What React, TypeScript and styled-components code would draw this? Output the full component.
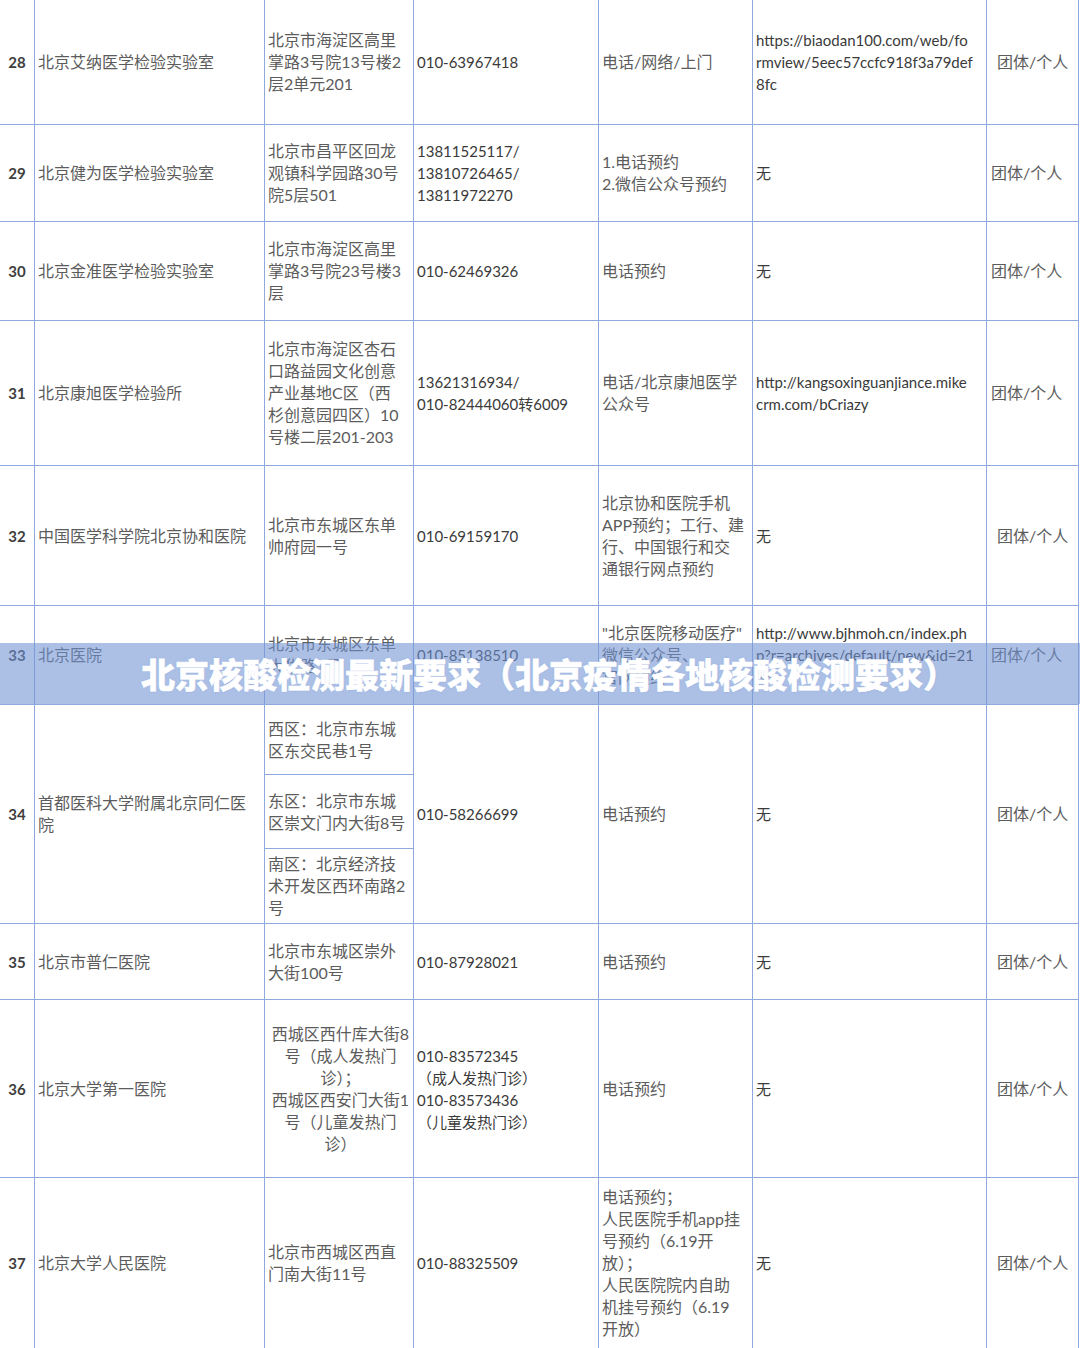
import React from 'react';
import styled, { createGlobalStyle } from 'styled-components';

const GlobalStyle = createGlobalStyle`
  html, body {
    margin: 0;
    padding: 0;
    background: #ffffff;
  }
  body {
    width: 1080px;
    height: 1348px;
    overflow: hidden;
    font-family: Lato, "Noto Sans CJK SC", sans-serif;
  }
`;

const LINE = '#8fa9de';

type Cell = string | string[];

interface RowData {
  no: number;
  height: number;
  name: Cell;
  address: Cell;
  subAddress?: { height: number; text: Cell }[];
  centerAddress?: boolean;
  phone: Cell;
  booking: Cell;
  url: Cell;
  kind: string;
  kindPad?: number;
}

const rows: RowData[] = [
  {
    no: 28,
    height: 125,
    name: '北京艾纳医学检验实验室',
    address: ['北京市海淀区高里', '掌路3号院13号楼2', '层2单元201'],
    phone: '010-63967418',
    booking: '电话/网络/上门',
    url: ['https://biaodan100.com/web/fo', 'rmview/5eec57ccfc918f3a79def', '8fc'],
    kind: '团体/个人',
    kindPad: 10,
  },
  {
    no: 29,
    height: 97,
    name: '北京健为医学检验实验室',
    address: ['北京市昌平区回龙', '观镇科学园路30号', '院5层501'],
    phone: ['13811525117/', '13810726465/', '13811972270'],
    booking: ['1.电话预约', '2.微信公众号预约'],
    url: '无',
    kind: '团体/个人',
  },
  {
    no: 30,
    height: 99,
    name: '北京金准医学检验实验室',
    address: ['北京市海淀区高里', '掌路3号院23号楼3', '层'],
    phone: '010-62469326',
    booking: '电话预约',
    url: '无',
    kind: '团体/个人',
  },
  {
    no: 31,
    height: 145,
    name: '北京康旭医学检验所',
    address: ['北京市海淀区杏石', '口路益园文化创意', '产业基地C区（西', '杉创意园四区）10', '号楼二层201-203'],
    phone: ['13621316934/', '010-82444060转6009'],
    booking: ['电话/北京康旭医学', '公众号'],
    url: ['http://kangsoxinguanjiance.mike', 'crm.com/bCriazy'],
    kind: '团体/个人',
  },
  {
    no: 32,
    height: 140,
    name: '中国医学科学院北京协和医院',
    address: ['北京市东城区东单', '帅府园一号'],
    phone: '010-69159170',
    booking: ['北京协和医院手机', 'APP预约；工行、建', '行、中国银行和交', '通银行网点预约'],
    url: '无',
    kind: '团体/个人',
    kindPad: 10,
  },
  {
    no: 33,
    height: 99,
    name: '北京医院',
    address: ['北京市东城区东单', '大华路1号'],
    phone: '010-85138510',
    booking: ['"北京医院移动医疗"', '微信公众号、', '官网预约'],
    url: ['http://www.bjhmoh.cn/index.ph', 'p?r=archives/default/new&id=21', '35'],
    kind: '团体/个人',
  },
  {
    no: 34,
    height: 216,
    name: ['首都医科大学附属北京同仁医', '院'],
    address: '',
    subAddress: [
      { height: 69, text: ['西区：北京市东城', '区东交民巷1号'] },
      { height: 73, text: ['东区：北京市东城', '区崇文门内大街8号'] },
      { height: 74, text: ['南区：北京经济技', '术开发区西环南路2', '号'] },
    ],
    phone: '010-58266699',
    booking: '电话预约',
    url: '无',
    kind: '团体/个人',
    kindPad: 10,
  },
  {
    no: 35,
    height: 76,
    name: '北京市普仁医院',
    address: ['北京市东城区崇外', '大街100号'],
    phone: '010-87928021',
    booking: '电话预约',
    url: '无',
    kind: '团体/个人',
    kindPad: 10,
  },
  {
    no: 36,
    height: 178,
    name: '北京大学第一医院',
    address: ['西城区西什库大街8', '号（成人发热门', '诊）；', '西城区西安门大街1', '号（儿童发热门', '诊）'],
    centerAddress: true,
    phone: ['010-83572345', '（成人发热门诊）', '010-83573436', '（儿童发热门诊）'],
    booking: '电话预约',
    url: '无',
    kind: '团体/个人',
    kindPad: 10,
  },
  {
    no: 37,
    height: 171,
    name: '北京大学人民医院',
    address: ['北京市西城区西直', '门南大街11号'],
    phone: '010-88325509',
    booking: ['电话预约；', '人民医院手机app挂', '号预约（6.19开', '放）；', '人民医院院内自助', '机挂号预约（6.19', '开放）'],
    url: '无',
    kind: '团体/个人',
    kindPad: 10,
  },
];

const Page = styled.div`
  position: relative;
  width: 1080px;
  height: 1348px;
  overflow: hidden;
  background: #ffffff;
`;

const Sheet = styled.table`
  margin: -1px 0 0 -1px;
  border-collapse: collapse;
  table-layout: fixed;
  width: 1080px;
`;

const Row = styled.tr<{ $h: number }>`
  height: ${(p) => p.$h}px;
`;

const Td = styled.td<{ $center?: boolean; $pad?: number }>`
  border: 1.5px solid ${LINE};
  padding: 0 0 0 ${(p) => p.$pad ?? 3}px;
  vertical-align: middle;
  text-align: ${(p) => (p.$center ? 'center' : 'left')};
  font-size: 16px;
  line-height: 22px;
  color: #5c5c5c;
  white-space: pre;
  overflow: hidden;
`;

const NoCell = styled(Td)`
  text-align: center;
  padding: 0;
  font-weight: 700;
  font-size: 15px;
  color: #3e3e3e;
`;

const Latin = styled(Td)`
  font-size: 15px;
  color: #3a3a3a;
`;

const SplitCell = styled.td`
  border: 1.5px solid ${LINE};
  padding: 0;
`;

const SubStack = styled.div`
  display: flex;
  flex-direction: column;
`;

const SubBox = styled.div<{ $h: number }>`
  height: ${(p) => p.$h}px;
  display: flex;
  align-items: center;
  padding-left: 3px;
  font-size: 16px;
  line-height: 22px;
  color: #5c5c5c;
  white-space: pre;
  & + & {
    border-top: 1.5px solid ${LINE};
  }
`;

const Filler = styled.td`
  border: none;
  border-left: 1.5px solid ${LINE};
`;

const Banner = styled.div`
  position: absolute;
  left: 0;
  top: 643px;
  width: 1080px;
  height: 61px;
  background: rgba(112, 146, 212, 0.58);
  display: flex;
  align-items: center;
  justify-content: center;
  padding-left: 18px;
  box-sizing: border-box;
`;

const BannerText = styled.h1`
  margin: 0;
  font-family: "Noto Sans CJK SC", sans-serif;
  font-size: 34px;
  font-weight: 900;
  color: #ffffff;
  -webkit-text-stroke: 0.6px #ffffff;
  text-shadow: 0 0 2px rgba(90, 120, 190, 0.4);
`;

const text = (c: Cell) => (Array.isArray(c) ? c.join('\n') : c);

export default function App() {
  return (
    <Page>
      <GlobalStyle />
      <Sheet>
        <colgroup>
          <col style={{ width: 35 }} />
          <col style={{ width: 230 }} />
          <col style={{ width: 149 }} />
          <col style={{ width: 185 }} />
          <col style={{ width: 154 }} />
          <col style={{ width: 234 }} />
          <col style={{ width: 92 }} />
          <col />
        </colgroup>
        <tbody>
          {rows.map((r) => (
            <Row key={r.no} $h={r.height}>
              <NoCell>{r.no}</NoCell>
              <Td>{text(r.name)}</Td>
              {r.subAddress ? (
                <SplitCell>
                  <SubStack>
                    {r.subAddress.map((s, i) => (
                      <SubBox key={i} $h={s.height}>
                        {text(s.text)}
                      </SubBox>
                    ))}
                  </SubStack>
                </SplitCell>
              ) : (
                <Td $center={r.centerAddress}>{text(r.address)}</Td>
              )}
              <Latin>{text(r.phone)}</Latin>
              <Td>{text(r.booking)}</Td>
              <Latin>{text(r.url)}</Latin>
              <Td $pad={r.kindPad ?? 4}>{r.kind}</Td>
              <Filler />
            </Row>
          ))}
        </tbody>
      </Sheet>
      <Banner>
        <BannerText>北京核酸检测最新要求（北京疫情各地核酸检测要求）</BannerText>
      </Banner>
    </Page>
  );
}
